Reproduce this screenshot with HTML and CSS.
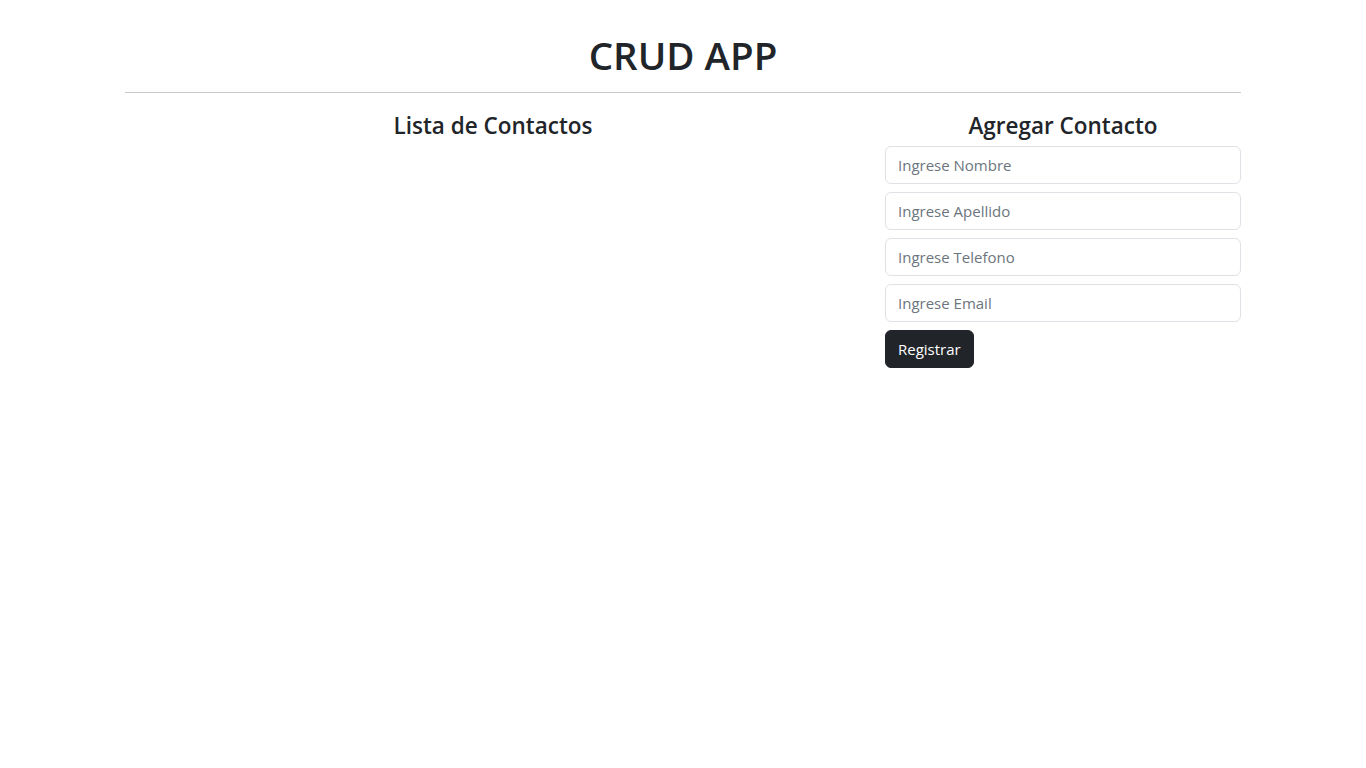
FILE: index.html
```html
<!DOCTYPE html>
<html lang="es">
<head>
<meta charset="utf-8">
<title>CRUD APP</title>
<link rel="stylesheet" href="styles.css">
</head>
<body>
<div class="container">
  <h1 class="title">CRUD APP</h1>
  <hr class="divider">
  <div class="row">
    <div class="col-main">
      <h4 class="section-title">Lista de Contactos</h4>
    </div>
    <div class="col-side">
      <h4 class="section-title">Agregar Contacto</h4>
      <form class="contact-form">
        <input class="form-control" type="text" placeholder="Ingrese Nombre">
        <input class="form-control" type="text" placeholder="Ingrese Apellido">
        <input class="form-control" type="text" placeholder="Ingrese Telefono">
        <input class="form-control" type="email" placeholder="Ingrese Email">
        <button class="btn-dark" type="button">Registrar</button>
      </form>
    </div>
  </div>
</div>
</body>
</html>
```
FILE: styles.css
```css
* { box-sizing: border-box; }
body {
  margin: 0;
  font-family: "Open Sans", "Noto Sans", sans-serif;
  font-size: 16px;
  line-height: 1.5;
  color: #212529;
  background: #fff;
}
.container {
  max-width: 1140px;
  margin: 0 auto;
  padding: 0 12px;
}
.title {
  margin: 34px 0 8px;
  font-size: 38.5px;
  font-weight: 600;
  line-height: 42px;
  text-align: center;
}
.divider {
  margin: 16px 0;
  border: 0;
  border-top: 1px solid #c8c9ca;
  height: 0;
}
.row {
  display: flex;
  margin: 0 -12px;
}
.col-main {
  flex: 0 0 66.6667%;
  padding: 0 12px;
}
.col-side {
  flex: 0 0 33.3333%;
  padding: 0 12px;
}
.section-title {
  margin: 2px 0 6px;
  font-size: 22.5px;
  font-weight: 600;
  line-height: 29px;
  text-align: center;
}
.contact-form {
  display: flex;
  flex-direction: column;
  align-items: flex-start;
  gap: 8px;
}
.form-control {
  display: block;
  width: 100%;
  height: 38px;
  padding: 6px 12px;
  font-family: inherit;
  font-size: 15px;
  line-height: 24px;
  color: #212529;
  background: #fff;
  border: 1px solid #dee2e6;
  border-radius: 6px;
  outline: none;
}
.form-control::placeholder {
  color: #6c757d;
}
.btn-dark {
  height: 38px;
  padding: 6px 12px;
  font-family: inherit;
  font-size: 15px;
  line-height: 24px;
  color: #fff;
  background: #212529;
  border: 1px solid #212529;
  border-radius: 6px;
}
```
